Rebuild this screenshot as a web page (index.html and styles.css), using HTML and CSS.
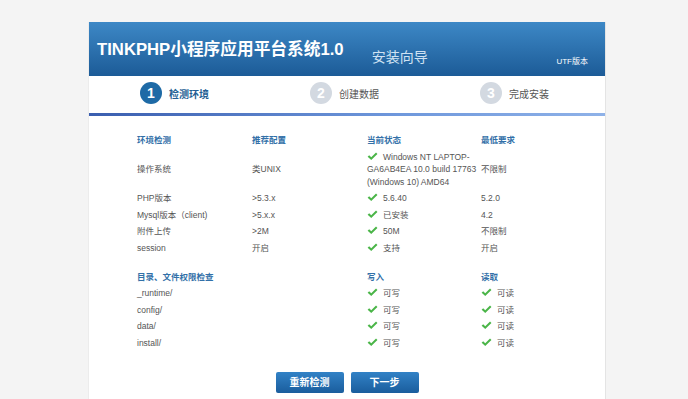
FILE: index.html
```html
<!DOCTYPE html>
<html lang="zh-CN">
<head>
    <meta charset="UTF-8">
    <title>TINKPHP小程序应用平台系统1.0 - 安装向导</title>
    <link rel="stylesheet" href="styles.css">
</head>
<body>
    <div class="wrap">
        <div class="header">
            <h1 class="title">TINKPHP小程序应用平台系统1.0</h1>
            <span class="subtitle">安装向导</span>
            <span class="version">UTF版本</span>
        </div>

        <div class="steps">
            <div class="step active"><span class="num">1</span><span class="step-name">检测环境</span></div>
            <div class="step"><span class="num">2</span><span class="step-name">创建数据</span></div>
            <div class="step"><span class="num">3</span><span class="step-name">完成安装</span></div>
        </div>

        <div class="main">
            <table class="check">
                <colgroup><col class="c1"><col class="c2"><col class="c3"><col class="c4"></colgroup>
                <tr class="head">
                    <td>环境检测</td>
                    <td>推荐配置</td>
                    <td>当前状态</td>
                    <td>最低要求</td>
                </tr>
                <tr>
                    <td>操作系统</td>
                    <td>类UNIX</td>
                    <td><svg class="ok" viewBox="0 0 12 10"><path d="M0.6 5.2 L2.3 3.6 L4.6 5.8 L9.9 0.6 L11.5 2.2 L4.6 9.0 Z"/></svg>Windows NT LAPTOP-GA6AB4EA 10.0 build 17763 (Windows 10) AMD64</td>
                    <td>不限制</td>
                </tr>
                <tr>
                    <td>PHP版本</td>
                    <td>&gt;5.3.x</td>
                    <td><svg class="ok" viewBox="0 0 12 10"><path d="M0.6 5.2 L2.3 3.6 L4.6 5.8 L9.9 0.6 L11.5 2.2 L4.6 9.0 Z"/></svg>5.6.40</td>
                    <td>5.2.0</td>
                </tr>
                <tr>
                    <td>Mysql版本（client)</td>
                    <td>&gt;5.x.x</td>
                    <td><svg class="ok" viewBox="0 0 12 10"><path d="M0.6 5.2 L2.3 3.6 L4.6 5.8 L9.9 0.6 L11.5 2.2 L4.6 9.0 Z"/></svg>已安装</td>
                    <td>4.2</td>
                </tr>
                <tr>
                    <td>附件上传</td>
                    <td>&gt;2M</td>
                    <td><svg class="ok" viewBox="0 0 12 10"><path d="M0.6 5.2 L2.3 3.6 L4.6 5.8 L9.9 0.6 L11.5 2.2 L4.6 9.0 Z"/></svg>50M</td>
                    <td>不限制</td>
                </tr>
                <tr>
                    <td>session</td>
                    <td>开启</td>
                    <td><svg class="ok" viewBox="0 0 12 10"><path d="M0.6 5.2 L2.3 3.6 L4.6 5.8 L9.9 0.6 L11.5 2.2 L4.6 9.0 Z"/></svg>支持</td>
                    <td>开启</td>
                </tr>
            </table>

            <table class="check dirs">
                <colgroup><col class="c1"><col class="c2"><col class="c3"><col class="c4"></colgroup>
                <tr class="head">
                    <td colspan="2">目录、文件权限检查</td>
                    <td>写入</td>
                    <td>读取</td>
                </tr>
                <tr>
                    <td colspan="2">_runtime/</td>
                    <td><svg class="ok" viewBox="0 0 12 10"><path d="M0.6 5.2 L2.3 3.6 L4.6 5.8 L9.9 0.6 L11.5 2.2 L4.6 9.0 Z"/></svg>可写</td>
                    <td><svg class="ok" viewBox="0 0 12 10"><path d="M0.6 5.2 L2.3 3.6 L4.6 5.8 L9.9 0.6 L11.5 2.2 L4.6 9.0 Z"/></svg>可读</td>
                </tr>
                <tr>
                    <td colspan="2">config/</td>
                    <td><svg class="ok" viewBox="0 0 12 10"><path d="M0.6 5.2 L2.3 3.6 L4.6 5.8 L9.9 0.6 L11.5 2.2 L4.6 9.0 Z"/></svg>可写</td>
                    <td><svg class="ok" viewBox="0 0 12 10"><path d="M0.6 5.2 L2.3 3.6 L4.6 5.8 L9.9 0.6 L11.5 2.2 L4.6 9.0 Z"/></svg>可读</td>
                </tr>
                <tr>
                    <td colspan="2">data/</td>
                    <td><svg class="ok" viewBox="0 0 12 10"><path d="M0.6 5.2 L2.3 3.6 L4.6 5.8 L9.9 0.6 L11.5 2.2 L4.6 9.0 Z"/></svg>可写</td>
                    <td><svg class="ok" viewBox="0 0 12 10"><path d="M0.6 5.2 L2.3 3.6 L4.6 5.8 L9.9 0.6 L11.5 2.2 L4.6 9.0 Z"/></svg>可读</td>
                </tr>
                <tr>
                    <td colspan="2">install/</td>
                    <td><svg class="ok" viewBox="0 0 12 10"><path d="M0.6 5.2 L2.3 3.6 L4.6 5.8 L9.9 0.6 L11.5 2.2 L4.6 9.0 Z"/></svg>可写</td>
                    <td><svg class="ok" viewBox="0 0 12 10"><path d="M0.6 5.2 L2.3 3.6 L4.6 5.8 L9.9 0.6 L11.5 2.2 L4.6 9.0 Z"/></svg>可读</td>
                </tr>
            </table>

            <div class="actions">
                <a class="btn" href="#">重新检测</a>
                <a class="btn" href="#">下一步</a>
            </div>
        </div>
    </div>
</body>
</html>
```

FILE: styles.css
```css
body {
    margin: 0;
    padding: 22px 0 0;
    background-color: #f4f4f4;
    font-family: "Liberation Sans", Arial, "Noto Sans CJK SC", sans-serif;
    color: #555;
}

.wrap {
    width: 516px;
    margin-left: 89px;
    background-color: #fff;
    box-shadow: 1px 0 0 #e4e4e4, -1px 0 0 #ececec;
    height: 377px;
}

.header {
    height: 54px;
    background: linear-gradient(to bottom, #3d88c6, #1c5b97);
    display: flex;
    align-items: flex-start;
    padding: 0 17px 0 8px;
    color: #fff;
}

.title {
    margin: 18px 0 0;
    font-size: 16.7px;
    line-height: 20px;
    font-weight: bold;
}

.subtitle {
    margin: 26px 0 0 28px;
    font-size: 14px;
    line-height: 18px;
    color: #cfe2f3;
}

.version {
    margin: 35px 0 0 auto;
    font-size: 8px;
    line-height: 10px;
}

.steps {
    height: 37px;
    display: flex;
    align-items: center;
    padding-left: 51px;
    border-bottom: 3px solid #5b84d0;
    border-image: linear-gradient(to right, #3a5eaf, #6f98dc 60%, #8fb2e8) 1;
}

.step {
    flex: none;
    width: 170px;
    display: flex;
    align-items: center;
    margin-top: -3px;
}

.step:last-child {
    width: auto;
}

.num {
    width: 22px;
    height: 22px;
    border-radius: 50%;
    background-color: #d3d9e1;
    color: #fff;
    font-size: 14px;
    line-height: 22px;
    text-align: center;
    font-weight: bold;
}

.step-name {
    margin-left: 7px;
    font-size: 10px;
    color: #555;
}

.step.active .num {
    background-color: #1e6aa6;
}

.step.active .step-name {
    color: #235e93;
    font-weight: bold;
}

.main {
    padding: 16px 0 0 48px;
}

.check {
    border-collapse: collapse;
    table-layout: fixed;
    width: 459px;
    font-size: 8.5px;
    line-height: 12.5px;
}

.check .c1,
.check .c2 {
    width: 115px;
}

.check .c3 {
    width: 114px;
}

.check td {
    padding: 2px 0;
    vertical-align: middle;
}

.check .head td {
    color: #3270a8;
    font-weight: bold;
}

.dirs {
    margin-top: 12.5px;
}

.ok {
    width: 11px;
    height: 9px;
    fill: #4ab548;
    margin-right: 5px;
    vertical-align: -1px;
}

.actions {
    display: flex;
    justify-content: center;
    gap: 7px;
    margin: 21px 0 0 -48px;
}

.btn {
    display: block;
    width: 68px;
    height: 21px;
    line-height: 21px;
    text-align: center;
    background: linear-gradient(to bottom, #3282c6, #1a5d9d);
    color: #fff;
    font-size: 10px;
    font-weight: bold;
    text-decoration: none;
    border-radius: 2px;
}
```
